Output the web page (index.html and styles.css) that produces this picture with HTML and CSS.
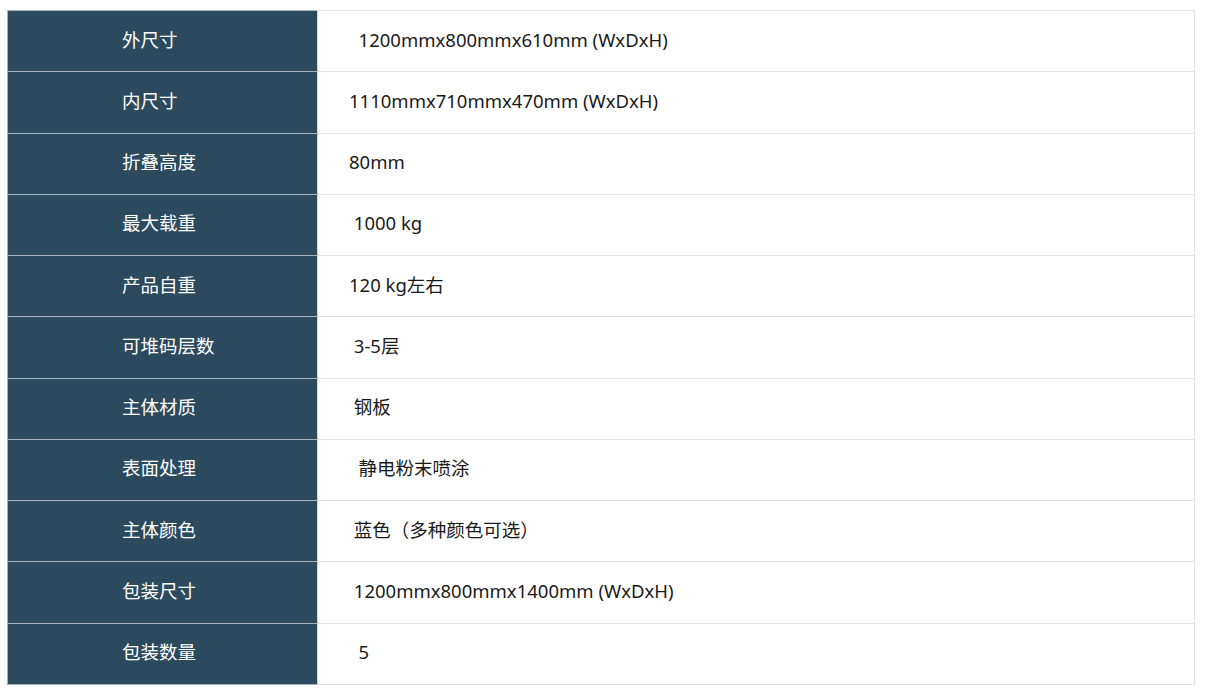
FILE: index.html
```html
<!DOCTYPE html>
<html lang="zh-CN">
<head>
<meta charset="utf-8">
<title>产品参数</title>
<link rel="stylesheet" href="styles.css">
</head>
<body>
<table class="spec">
  <tbody>
    <tr><th>外尺寸</th><td>&nbsp; 1200mmx800mmx610mm (WxDxH)</td></tr>
    <tr><th>内尺寸</th><td>1110mmx710mmx470mm (WxDxH)</td></tr>
    <tr><th>折叠高度</th><td>80mm</td></tr>
    <tr><th>最大载重</th><td>&nbsp;1000 kg</td></tr>
    <tr><th>产品自重</th><td>120 kg左右</td></tr>
    <tr><th>可堆码层数</th><td>&nbsp;3-5层</td></tr>
    <tr><th>主体材质</th><td>&nbsp;钢板</td></tr>
    <tr><th>表面处理</th><td>&nbsp;&nbsp;静电粉末喷涂</td></tr>
    <tr><th>主体颜色</th><td>&nbsp;蓝色（多种颜色可选）</td></tr>
    <tr><th>包装尺寸</th><td>&nbsp;1200mmx800mmx1400mm (WxDxH)</td></tr>
    <tr><th>包装数量</th><td>&nbsp;&nbsp;5</td></tr>
  </tbody>
</table>
</body>
</html>
```

FILE: styles.css
```css
html, body {
  margin: 0;
  padding: 0;
  background: #ffffff;
}
body {
  padding: 10px 10px 0 7px;
  font-family: "Noto Sans", "Noto Sans CJK SC", sans-serif;
}
.spec {
  border-collapse: collapse;
  width: 1188px;
  height: 675px;
  font-size: 18.5px;
  line-height: 1.2;
}
.spec th,
.spec td {
  border: 1px solid #e3e3e3;
  vertical-align: middle;
  font-weight: normal;
  text-align: left;
  padding: 0 0 3px 0;
}
.spec th {
  width: 195px;
  padding-left: 114px;
  background: #2c4a5e;
  color: #ffffff;
  border-color: #a9b3bb;
  border-right-color: #d4d8db;
}
.spec td {
  padding-left: 31px;
  color: #1a1a1a;
}
```
